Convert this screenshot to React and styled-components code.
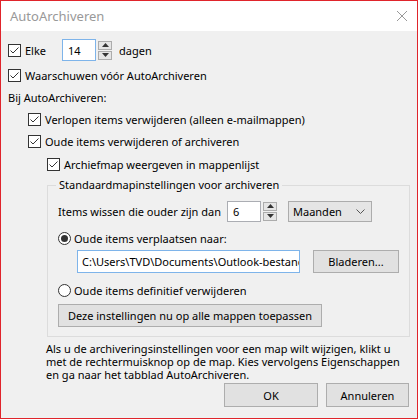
import styled, { createGlobalStyle } from "styled-components";

const Global = createGlobalStyle`
  html, body { margin: 0; padding: 0; background: #f0f0f0; }
  * { box-sizing: border-box; }
`;

function CheckBox() {
  return (
    <Box>
      <svg width="11" height="11" viewBox="0 0 11 11">
        <path d="M1.5 5.5 L4 8 L9.5 2.5" fill="none" stroke="#333" strokeWidth="1" />
      </svg>
    </Box>
  );
}

function Radio({ checked }) {
  return <Circle>{checked && <Dot />}</Circle>;
}

function Spinner() {
  return (
    <Spin>
      <SpinBtn>
        <svg width="7" height="4" viewBox="0 0 7 4"><path d="M0 4 L3.5 0 L7 4 Z" fill="#333" /></svg>
      </SpinBtn>
      <SpinBtn>
        <svg width="7" height="4" viewBox="0 0 7 4"><path d="M0 0 L3.5 4 L7 0 Z" fill="#333" /></svg>
      </SpinBtn>
    </Spin>
  );
}

export default function App() {
  return (
    <Window>
      <Global />
      <TitleBar>
        <Title>AutoArchiveren</Title>
        <svg width="12" height="12" viewBox="0 0 12 12">
          <path d="M1 1 L11 11 M11 1 L1 11" stroke="#999" strokeWidth="1" />
        </svg>
      </TitleBar>
      <Body>
        <Row $top={7} $h={24}>
          <CheckBox />
          <Label $w={37}>Elke</Label>
          <TextBox $w={34} $focus>14</TextBox>
          <Spinner />
          <Label $ml={7}>dagen</Label>
        </Row>
        <Row $top={2}>
          <CheckBox />
          <Label>Waarschuwen vóór AutoArchiveren</Label>
        </Row>
        <Row>
          <Label $ml={0}>Bij AutoArchiveren:</Label>
        </Row>
        <Row $indent={20}>
          <CheckBox />
          <Label>Verlopen items verwijderen (alleen e-mailmappen)</Label>
        </Row>
        <Row $indent={20}>
          <CheckBox />
          <Label>Oude items verwijderen of archiveren</Label>
        </Row>
        <Row $indent={39} $top={1}>
          <CheckBox />
          <Label>Archiefmap weergeven in mappenlijst</Label>
        </Row>
        <Group>
          <Legend>Standaardmapinstellingen voor archiveren</Legend>
          <Row $top={7} $h={22}>
            <Label $ml={0} $w={169}>Items wissen die ouder zijn dan</Label>
            <TextBox $w={34} $h={21}>6</TextBox>
            <Spinner />
            <Select>
              <span>Maanden</span>
              <svg width="9" height="5" viewBox="0 0 9 5">
                <path d="M0.5 0.5 L4.5 4.5 L8.5 0.5" fill="none" stroke="#555" strokeWidth="1" />
              </svg>
            </Select>
          </Row>
          <Row $top={5}>
            <Radio checked />
            <Label $ml={3}>Oude items verplaatsen naar:</Label>
          </Row>
          <Row $top={1} $h={23} $indent={19}>
            <PathBox>C:\Users\TVD\Documents\Outlook-bestand</PathBox>
            <Button $w={86} $ml={13}>Bladeren...</Button>
          </Row>
          <Row $top={6}>
            <Radio />
            <Label $ml={3}>Oude items definitief verwijderen</Label>
          </Row>
          <Row $top={3} $h={23}>
            <Button $w={264}>Deze instellingen nu op alle mappen toepassen</Button>
          </Row>
        </Group>
        <Note>
          Als u de archiveringsinstellingen voor een map wilt wijzigen, klikt u
          met de rechtermuisknop op de map. Kies vervolgens Eigenschappen
          en ga naar het tabblad AutoArchiveren.
        </Note>
        <Footer>
          <Button $w={94} $h={24}>OK</Button>
          <Button $w={83} $h={24}>Annuleren</Button>
        </Footer>
      </Body>
    </Window>
  );
}

const Window = styled.div`
  width: 418px;
  height: 419px;
  border: 1px solid #e0242b;
  background: #f0f0f0;
  font-family: "Noto Sans", "Open Sans", sans-serif;
  font-size: 11px;
  color: #000;
  display: flex;
  flex-direction: column;
  overflow: hidden;
`;

const TitleBar = styled.div`
  height: 30px;
  background: #fff;
  display: flex;
  align-items: center;
  justify-content: space-between;
  padding: 0 9px 0 9px;
  flex-shrink: 0;
`;

const Title = styled.div`
  font-size: 13px;
  color: #999;
`;

const Body = styled.div`
  flex: 1;
  padding: 0 8px 0 7px;
  display: flex;
  flex-direction: column;
`;

const Row = styled.div`
  display: flex;
  align-items: center;
  height: ${(p) => p.$h || 22}px;
  margin-top: ${(p) => p.$top || 0}px;
  padding-left: ${(p) => p.$indent || 0}px;
  flex-shrink: 0;
`;

const Label = styled.span`
  margin-left: ${(p) => (p.$ml !== undefined ? p.$ml : 4)}px;
  width: ${(p) => (p.$w ? p.$w + "px" : "auto")};
  white-space: nowrap;
`;

const Box = styled.span`
  width: 13px;
  height: 13px;
  border: 1px solid #333;
  background: #fff;
  display: flex;
  align-items: center;
  justify-content: center;
  flex-shrink: 0;
`;

const Circle = styled.span`
  width: 13px;
  height: 13px;
  border: 1px solid #333;
  border-radius: 50%;
  background: #fff;
  display: flex;
  align-items: center;
  justify-content: center;
  flex-shrink: 0;
`;

const Dot = styled.span`
  width: 7px;
  height: 7px;
  border-radius: 50%;
  background: #333;
`;

const TextBox = styled.div`
  width: ${(p) => p.$w}px;
  height: ${(p) => p.$h || 22}px;
  border: 1px solid ${(p) => (p.$focus ? "#7eb4ea" : "#abadb3")};
  background: #fff;
  padding: 0 0 0 5px;
  display: flex;
  align-items: center;
`;

const Spin = styled.div`
  display: flex;
  flex-direction: column;
  gap: 1px;
  margin-left: 2px;
`;

const SpinBtn = styled.div`
  width: 14px;
  height: 9px;
  border: 1px solid #acacac;
  background: #e5e5e5;
  display: flex;
  align-items: center;
  justify-content: center;
`;

const Select = styled.div`
  width: 84px;
  height: 21px;
  margin-left: 11px;
  border: 1px solid #acacac;
  background: #e5e5e5;
  display: flex;
  align-items: center;
  justify-content: space-between;
  padding: 0 6px 0 4px;
`;

const Group = styled.fieldset`
  margin: 2px 0 0 39px;
  width: 363px;
  height: 160px;
  border: 1px solid #dcdcdc;
  padding: 0 0 0 10px;
  flex-shrink: 0;
`;

const Legend = styled.legend`
  padding: 0 3px;
  margin-left: -2px;
  line-height: 16px;
`;

const PathBox = styled.div`
  width: 223px;
  height: 23px;
  border: 1px solid #7eb4ea;
  background: #fff;
  padding: 0 4px;
  display: flex;
  align-items: center;
  white-space: nowrap;
  overflow: hidden;
`;

const Button = styled.div`
  width: ${(p) => p.$w}px;
  height: ${(p) => p.$h || 23}px;
  margin-left: ${(p) => p.$ml || 0}px;
  border: 1px solid #adadad;
  background: #e1e1e1;
  display: flex;
  align-items: center;
  justify-content: center;
  white-space: nowrap;
  flex-shrink: 0;
`;

const Note = styled.p`
  margin: 5px 0 0 38px;
  line-height: 13px;
  width: 360px;
`;

const Footer = styled.div`
  display: flex;
  justify-content: flex-end;
  gap: 8px;
  margin-top: 2px;
`;
